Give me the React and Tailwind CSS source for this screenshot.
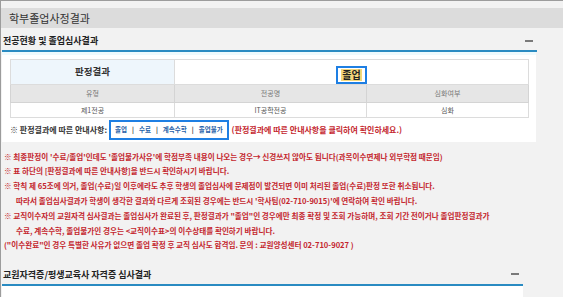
import React from "react";

const F = { fontFamily: '"Noto Sans CJK KR", "Noto Sans", sans-serif' };

function SectionHeader({ title, widthClass, minusClass }) {
  return (
    <div className={`${widthClass} flex flex-col`}>
      <div className="flex items-end justify-between h-[22px]">
        <span className="text-[9px] font-bold text-[#222] leading-none pl-[1px] pb-[5px]">{title}</span>
        <span className={`block h-[2px] w-[8px] bg-[#7a7a7a] ${minusClass}`} />
      </div>
      <div className="h-[2px] bg-[#2a8bc2]" />
    </div>
  );
}

export default function App() {
  const notes = [
    { t: "※ 최종판정이 '수료/졸업'인데도 '졸업불가사유'에 학점부족 내용이 나오는 경우→ 신경쓰지 않아도 됩니다(과목이수면제나 외부학점 때문임)", i: false },
    { t: "※ 표 하단의 [판정결과에 따른 안내사항]을 반드시 확인하시기 바랍니다.", i: false },
    { t: "※ 학칙 제 65조에 의거, 졸업(수료)일 이후에라도 추후 학생의 졸업심사에 문제점이 발견되면 이미 처리된 졸업(수료)판정 또한 취소됩니다.", i: false },
    { t: "따라서 졸업심사결과가 학생이 생각한 결과와 다르게 조회된 경우에는 반드시 '학사팀(02-710-9015)'에 연락하여 확인 바랍니다.", i: true },
    { t: "※ 교직이수자의 교원자격 심사결과는 졸업심사가 완료된 후, 판정결과가 \"졸업\"인 경우에만 최종 확정 및 조회 가능하며, 조회 기간 전이거나 졸업판정결과가", i: false },
    { t: "수료, 계속수학, 졸업불가인 경우는 <교직이수표>의 이수상태를 확인하기 바랍니다.", i: true },
    { t: "(\"이수완료\"인 경우 특별한 사유가 없으면 졸업 확정 후 교직 심사도 합격임. 문의 : 교원양성센터 02-710-9027 )", i: false },
  ];
  return (
    <div style={F} className="w-[563px] h-[297px] overflow-hidden bg-[#f2f2f2] border-t border-l border-[#9c9c9c]">
      <div className="mt-[7px] h-[20px] bg-[#dcdcdc] flex items-center pl-[8px]">
        <span className="text-[11px] text-[#333] leading-none">학부졸업사정결과</span>
      </div>
      <div className="pl-[1px]">
        <SectionHeader title="전공현황 및 졸업심사결과" widthClass="w-[535px]" minusClass="mb-[8px] mr-[4px]" />
        <div className="w-[534px] h-[90px] bg-white">
          <div className="h-[3px] bg-[#eefafd]" />
          <div className="px-[8px] pt-[4px]">
            <table className="w-[519px] border-collapse text-center table-fixed">
              <colgroup>
                <col className="w-[164px]" />
                <col className="w-[192px]" />
                <col />
              </colgroup>
              <tbody>
                <tr className="h-[22px]">
                  <td className="border border-[#dcdcdc] bg-[#eef6fc] text-[9.5px] font-bold text-[#333] leading-none">판정결과</td>
                  <td colSpan={2} className="border border-[#dcdcdc] bg-white">
                    <span className="inline-flex items-center justify-center h-[18px] px-[3px] border-2 border-[#1e7fe3] align-middle">
                      <span className="bg-[#f5d77a] text-[10px] font-bold text-[#222] leading-none px-[1px] py-[1px]">졸업</span>
                    </span>
                  </td>
                </tr>
                <tr className="h-[18px] bg-[#e6e6e6]">
                  <td className="border border-[#d4d4d4] text-[7px] text-[#777] leading-none">유형</td>
                  <td className="border border-[#d4d4d4] text-[7px] text-[#777] leading-none">전공명</td>
                  <td className="border border-[#d4d4d4] text-[7px] text-[#777] leading-none">심화여부</td>
                </tr>
                <tr className="h-[15px]">
                  <td className="border border-[#dcdcdc] text-[7px] text-[#555] leading-none">제1전공</td>
                  <td className="border border-[#dcdcdc] text-[7px] text-[#555] leading-none">IT공학전공</td>
                  <td className="border border-[#dcdcdc] text-[7px] text-[#555] leading-none">심화</td>
                </tr>
              </tbody>
            </table>
            <div className="flex items-center mt-[1px] h-[21px]">
              <span className="text-[8px] font-bold text-[#333] leading-none whitespace-nowrap">※ 판정결과에 따른 안내사항:</span>
              <span className="ml-[2px] flex items-center h-[20px] border-2 border-[#1e7fe3] px-[4px] gap-[5px] text-[6.5px] text-[#1f5fa8] font-bold leading-none whitespace-nowrap">
                <span>졸업</span><span className="text-[#333]">|</span>
                <span>수료</span><span className="text-[#333]">|</span>
                <span>계속수학</span><span className="text-[#333]">|</span>
                <span>졸업불가</span>
              </span>
              <span className="ml-[3px] text-[8px] font-bold text-[#c4262e] leading-none whitespace-nowrap">(판정결과에 따른 안내사항을 클릭하여 확인하세요.)</span>
            </div>
          </div>
        </div>
        <div className="pt-[7px] pl-[2px] flex flex-col">
          {notes.map((n, k) => (
            <div key={k} className={`h-[14.8px] flex items-center text-[7.6px] font-bold text-[#c4262e] leading-none whitespace-nowrap ${n.i ? "pl-[12px]" : ""}`}>
              {n.t}
            </div>
          ))}
        </div>
        <div className="mt-[9px]">
          <SectionHeader title="교원자격증/평생교육사 자격증 심사결과" widthClass="w-[521px]" minusClass="mb-[9px] mr-[4px]" />
          <div className="w-[521px] h-[20px] bg-white" />
        </div>
      </div>
    </div>
  );
}
